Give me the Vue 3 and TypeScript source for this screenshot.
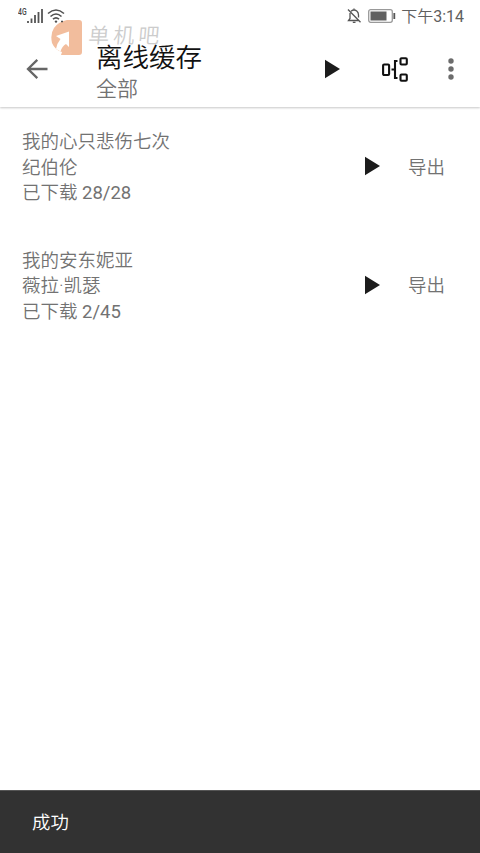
<script setup lang="ts">
interface OfflineItem {
  title: string
  author: string
  done: number
  total: number
}

const items: OfflineItem[] = [
  { title: '我的心只悲伤七次', author: '纪伯伦', done: 28, total: 28 },
  { title: '我的安东妮亚', author: '薇拉·凯瑟', done: 2, total: 45 },
]
</script>

<template>
  <div class="screen">
    <header class="header">
      <div class="watermark">
        <svg class="mark" width="31" height="36" viewBox="0 0 31 36">
          <path d="M16 0H28Q31 0 31 3V32Q31 35 28 35H10L11 32Q4 30 1 23Q-1 14 3 8Q7 2 16 0Z" fill="#f2bd9d" />
          <path d="M5 16L18 11.500V27L15 24Q11 26 9.500 31.500L5 29Q5.500 24 9.500 19Z" fill="#fff" />
        </svg>
        <span class="mark-text">单机吧</span>
      </div>
      <div class="status">
        <div class="status-side">
          <span class="net">4G</span>
          <svg class="signal" width="16" height="15" viewBox="0 0 16 15" stroke="#555" stroke-width="1.8">
            <path d="M1 12V14M4.500 9.500V14M8 6V14M11.500 3V14M15 0V14" />
          </svg>
          <svg class="wifi" width="18" height="14" viewBox="0 0 18 14" fill="none" stroke="#505050" stroke-width="1.600">
            <path d="M1 4.500Q9-2.500 17 4.500M3.500 7.500Q9 2.500 14.500 7.500M6 10.200Q9 7.500 12 10.200" />
            <circle cx="9" cy="12.600" r="1.200" fill="#505050" stroke="none" />
            <path d="M14 12.500H16" />
          </svg>
        </div>
        <div class="status-side">
          <svg width="15" height="16" viewBox="0 0 15 16" fill="none" stroke="#555" stroke-width="1.300">
            <path d="M4 3.200Q7 .8 10 3.200Q11.500 4.500 11.500 7V9.500M3 5V10.500L1.500 12.500H11.500M5.800 14.300H8.500M7 .5V2M1 1.500L13.500 14.300" />
          </svg>
          <svg class="battery" width="28" height="14" viewBox="0 0 28 14" fill="none">
            <rect x=".7" y=".7" width="23.600" height="12.600" rx="2" stroke="#999" stroke-width="1.300" />
            <rect x="2.500" y="2.500" width="16" height="9" fill="#606060" />
            <path d="M26.300 4V10" stroke="#555" stroke-width="1.800" />
          </svg>
          <span class="clock">下午<span class="digits">3:14</span></span>
        </div>
      </div>
      <div class="toolbar">
        <svg class="back" width="22" height="20" viewBox="0 0 22 20" fill="none" stroke="#666" stroke-width="2.300">
          <path d="M21.500 10H2M11.300 .9L2 10L11.300 19.100" />
        </svg>
        <div class="heading">
          <h1>离线缓存</h1>
          <p>全部</p>
        </div>
        <svg class="play" width="15" height="20" viewBox="0 0 15 20"><path d="M0 .7L15 10L0 19.300Z" fill="#1c1c1c" /></svg>
        <svg class="tree" width="26" height="25" viewBox="0 0 26 25" fill="none" stroke="#111" stroke-width="2.100">
          <rect x="1.100" y="7.500" width="6" height="10.500" rx="1" />
          <path d="M15.500 4H13V21H15.500M9.500 12.500H13" />
          <rect x="18.500" y="1.200" width="6.300" height="6.300" rx="1" />
          <rect x="18.500" y="17.500" width="6.300" height="6.300" rx="1" />
        </svg>
        <svg class="more" width="6" height="22" viewBox="0 0 6 22" fill="#6c6c6c">
          <circle cx="3" cy="3" r="2.700" /><circle cx="3" cy="11" r="2.700" /><circle cx="3" cy="19" r="2.700" />
        </svg>
      </div>
    </header>
    <main class="list">
      <div v-for="item in items" :key="item.title" class="item">
        <div class="info">
          <div>{{ item.title }}</div>
          <div>{{ item.author }}</div>
          <div>已下载 <span class="digits">{{ item.done }}/{{ item.total }}</span></div>
        </div>
        <svg class="item-play" width="15" height="20" viewBox="0 0 15 20"><path d="M0 .7L15 10L0 19.300Z" fill="#1c1c1c" /></svg>
        <span class="export">导出</span>
      </div>
    </main>
    <footer class="snackbar">成功</footer>
  </div>
</template>

<style>
body {
  margin: 0;
  background: #fff;
}
</style>

<style scoped>
.screen {
  display: flex;
  flex-direction: column;
  width: 480px;
  height: 853px;
  overflow: hidden;
  background: #fff;
  font-family: Roboto, "Noto Sans CJK SC", sans-serif;
  font-weight: 350;
  color: #727272;
}
.digits {
  font-weight: 400;
}
.header {
  position: relative;
  box-sizing: border-box;
  flex: none;
  height: 107px;
  background: #fff;
  box-shadow: 0 1px 2px rgba(0, 0, 0, 0.22);
}
.watermark {
  position: absolute;
  left: 51px;
  top: 20px;
  display: flex;
}
.mark-text {
  margin: 2px 0 0 6px;
  font-family: "Noto Sans CJK SC", sans-serif;
  font-size: 21px;
  font-weight: 350;
  line-height: 24px;
  letter-spacing: 4px;
  color: #ccc;
  transform: skewX(-5deg);
}
.status {
  position: relative;
  display: flex;
  justify-content: space-between;
  box-sizing: border-box;
  height: 32px;
  padding: 0 16px 0 18px;
}
.status-side {
  display: flex;
  align-items: center;
}
.net {
  align-self: flex-start;
  margin-top: 7px;
  width: 9px;
  font-size: 9.5px;
  line-height: 10px;
  font-weight: 500;
  color: #454545;
  transform: scaleX(0.72);
  transform-origin: left;
}
.wifi {
  margin-left: 4px;
}
.battery {
  margin-left: 6px;
}
.clock {
  margin-left: 5px;
  padding-top: 2px;
  font-size: 16px;
  line-height: 20px;
  color: #606060;
}
.toolbar {
  position: relative;
  display: flex;
  align-items: center;
  height: 74px;
  padding: 0 26px;
}
.heading {
  flex: 1;
  margin-left: 48px;
  padding-top: 6px;
}
h1 {
  margin: 0;
  font-size: 26.5px;
  line-height: 33px;
  font-weight: 350;
  color: #111;
}
.heading p {
  margin: 0;
  font-size: 21px;
  line-height: 30px;
}
.tree {
  margin-left: 42px;
}
.more {
  margin-left: 40px;
}
.list {
  flex: 1;
}
.item {
  display: flex;
  align-items: center;
  box-sizing: border-box;
  height: 118.6px;
  padding: 0 35px 0 22px;
}
.info {
  flex: 1;
  padding-top: 4px;
  font-size: 18.5px;
  line-height: 25.3px;
}
.export {
  margin-left: 28px;
  padding-top: 3px;
  font-size: 18.5px;
  line-height: 26px;
}
.snackbar {
  box-sizing: border-box;
  height: 63px;
  padding: 1px 0 0 32px;
  background: #323232;
  border-top: 1px solid #555;
  color: #fff;
  font-size: 18.4px;
  line-height: 62px;
}
</style>
